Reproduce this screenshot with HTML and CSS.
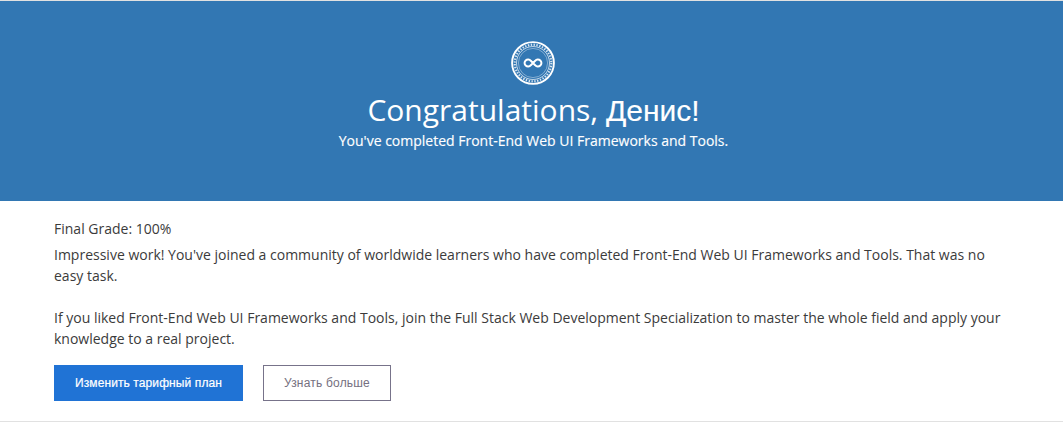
FILE: index.html
```html
<!DOCTYPE html>
<html lang="en">
<head>
<meta charset="utf-8">
<title>Course completed</title>
<link rel="stylesheet" href="styles.css">
</head>
<body>
<main class="card">
<header class="hero">
<svg class="badge" viewBox="0 0 44 44" fill="none" stroke="#fff">
<circle cx="22" cy="22" r="20.900" stroke-width="1.9"/>
<circle cx="22" cy="22" r="18.300" stroke-width="2.200" stroke-dasharray="1.400 1.475" opacity=".8"/>
<circle cx="22" cy="22" r="16.500" stroke-width=".8" opacity=".85"/>
<circle cx="22" cy="22" r="14.600" stroke-width=".6" opacity=".65"/>
<path d="M24.200 19.800A3.500 3.500 0 1 1 24.200 24.200L19.800 19.800A3.500 3.500 0 1 0 19.800 24.200Z" stroke-width="2" stroke-linejoin="round"/>
</svg>
<h1 class="title">Congratulations, <span class="name">Денис!</span></h1>
<p class="subtitle">You've completed Front-End Web UI Frameworks and Tools.</p>
</header>
<section class="content">
<p class="grade">Final Grade: 100%</p>
<p class="message">Impressive work! You've joined a community of worldwide learners who have completed Front-End Web UI Frameworks and Tools. That was no easy task.</p>
<p class="message next">If you liked Front-End Web UI Frameworks and Tools, join the Full Stack Web Development Specialization to master the whole field and apply your knowledge to a real project.</p>
<div class="actions">
<button class="button primary">Изменить тарифный план</button>
<button class="button secondary">Узнать больше</button>
</div>
</section>
</main>
</body>
</html>
```

FILE: styles.css
```css
* { box-sizing: border-box; }
body { margin: 0; background: #fff; font-family: "Open Sans", sans-serif; color: #3b3b3b; }
.card { height: 422px; border-top: 1px solid #e1e1e1; border-bottom: 1px solid #e1e1e1; }
.hero { height: 200px; padding: 40px 0 0 4px; background: #3277b3; color: #fff; display: flex; flex-direction: column; align-items: center; }
.badge { width: 44px; height: 44px; flex: none; margin-right: 1px; }
.title { margin: 4px 0 0; font-size: 30px; line-height: 42px; font-weight: 400; }
.name { font-family: "Liberation Sans", sans-serif; -webkit-text-stroke: .15px #fff; }
.subtitle { margin: -2px 0 0; font-size: 14px; line-height: 21px; -webkit-text-stroke: .15px #fff; }
.content { padding: 17px 54px 0; }
.grade, .message { margin: 0; font-size: 14px; line-height: 21px; }
.grade { margin-bottom: 5px; }
.next { margin-top: 21px; }
.actions { display: flex; gap: 20px; margin-top: 16px; }
.button { height: 36px; padding: 0; font: 12px "Liberation Sans", sans-serif; letter-spacing: .1px; border: 1px solid #77738a; }
.primary { width: 189px; background: #2073d5; border-color: #2073d5; color: #fff; -webkit-text-stroke: .2px #fff; }
.secondary { width: 128px; background: #fff; color: #757080; letter-spacing: .2px; }
```
